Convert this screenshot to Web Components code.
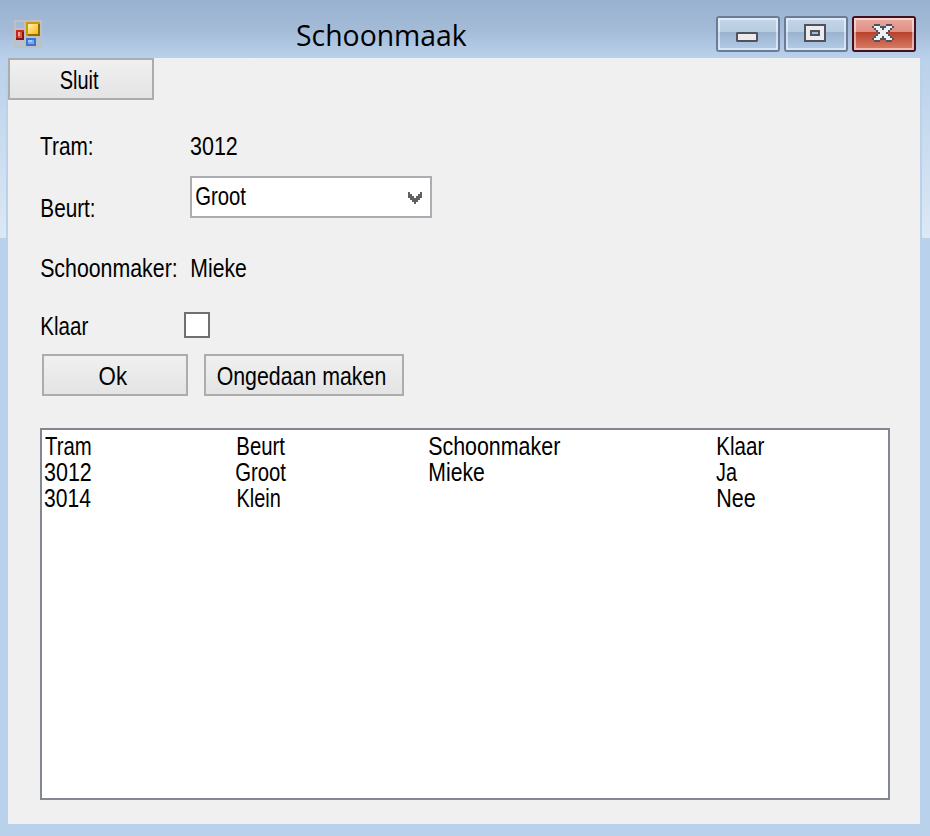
<!DOCTYPE html>
<html lang="nl">
<head>
<meta charset="utf-8">
<title>Schoonmaak</title>
<style>
body{margin:0;font:25px/26px "Liberation Sans",sans-serif;color:#000;overflow:hidden}
</style>
</head>
<body>
<app-window></app-window>
<script>
const define=(name,html,setup)=>customElements.define(name,class extends HTMLElement{
  constructor(){super();this.attachShadow({mode:'open'}).innerHTML=html}
  connectedCallback(){if(setup)setup(this,this.shadowRoot)}
});

/* Text condensed horizontally so that its ink fills the width given in "w"; "x" nudges it sideways. */
define('fit-text',`<style>:host{display:block;white-space:nowrap;flex:none;padding-top:1px}span{display:inline-block;vertical-align:top;transform-origin:0 0}</style><span><slot></slot></span>`,(el,root)=>{
  const w=+el.getAttribute('w'),x=+(el.getAttribute('x')||0),s=getComputedStyle(el),c=document.createElement('canvas').getContext('2d');
  c.font=s.fontWeight+' '+s.fontSize+' '+s.fontFamily;
  const m=c.measureText(el.textContent),l=-m.actualBoundingBoxLeft,k=w/(m.actualBoundingBoxRight-l);
  el.style.width=w+'px';
  root.querySelector('span').style.transform='translateX('+x+'px) scaleX('+k+') translateX('+(-l)+'px)';
});

define('app-icon',`<style>:host{display:block;width:28px;height:28px}svg{display:block}</style>
<svg width="28" height="28" viewBox="0 0 14 14" shape-rendering="crispEdges">
<defs><linearGradient id="y" x2="1" y2="1"><stop stop-color="#fff3b8"/><stop offset="1" stop-color="#fdb900"/></linearGradient></defs>
<path fill="#bfc0c2" fill-rule="evenodd" d="M0 0h14v14H0zM1 1v3h4V1zM1 11v2h2v-2zM4 11v2h1v-2zM12 9v4h1V9z"/>
<path fill="#c42a1a" d="M1 5h4v5H1z"/><path fill="#8c1410" d="M4 6h1v4H1V9h3z"/><path fill="#d85a50" d="M2 6h2v3H2z"/><path fill="#f3a49d" d="M2 6h1v2H2z"/>
<path fill="#c99812" d="M6 1h7v7H6z"/><path fill="#8f6c00" d="M12 2h1v6H7V7h5z"/><path fill="url(#y)" d="M7 2h5v5H7z"/>
<path fill="#3f73d0" d="M6 9h5v4H6z"/><path fill="#75a6fa" d="M7 10h3v2H7z"/><path fill="#a6c8ff" d="M7 10h2v1H7z"/></svg>`);

define('caption-button',`<style>
:host{display:block;box-sizing:border-box;width:64px;height:36px;border:2px solid #697d9a;border-radius:3px;background:linear-gradient(#c3d6e8,#b8cce0 14px,#9ab2cd 14px,#b3cde7)}
:host([kind=close]){border-color:#431021;background:linear-gradient(#eba99f,#df8f82 14px,#b8402a 14px,#d9806a)}
div{box-sizing:border-box;height:32px;border:2px solid #ffffff80;display:flex;justify-content:center;padding:4px 2px 0 0}
svg{display:none}:host([kind=min]) .min,:host([kind=max]) .max,:host([kind=close]) .close{display:block}
</style><div>
<svg class="min" width="22" height="18" viewBox="0 0 11 9"><path fill="#51525f" d="M.5 4h10l.5.5v4l-.5.5H.5L0 8.500v-4z"/><path fill="#ececec" d="M1 5h9v3H1z"/></svg>
<svg class="max" width="22" height="18" viewBox="0 0 11 9" shape-rendering="crispEdges"><path fill="#51525f" d="M0 0h11v9H0z"/><path fill="#ececec" d="M1 1h9v7H1z"/><path fill="#51525f" d="M3 3h5v3H3z"/><path fill="#9ebbd9" d="M4 4h3v1H4z"/></svg>
<svg class="close" width="22" height="18" viewBox="0 0 11 9" shape-rendering="crispEdges"><path fill="#51525f" d="M1 0h3v1h3V0h3v1h1v1h-1v1H9v1H8v1h1v1h1v1h1v1h-1v1H7V8H4v1H1V8H0V7h1V6h1V5h1V4H2V3H1V2H0V1h1z"/><path fill="#f0f0f0" d="M1 1h3v1h1v1h1V2h1V1h3v1H9v1H8v1H7v1h1v1h1v1h1v1H7V7H6V6H5v1H4v1H1V7h1V6h1V5h1V4H3V3H2V2H1z"/></svg>
</div>`);

define('title-bar',`<style>:host{display:flex;height:58px;padding:0 14px;box-sizing:border-box;background:linear-gradient(#99b2cf,#a3bbd7 50%,#b9d1ea)}
app-icon{margin-top:20px}fit-text{font:30px/40px "Open Sans",sans-serif;margin:14px 0 0 255px}
nav{display:flex;gap:4px;margin:16px 0 0 auto}</style>
<app-icon></app-icon><fit-text w="170">Schoonmaak</fit-text>
<nav><caption-button kind="min"></caption-button><caption-button kind="max"></caption-button><caption-button kind="close"></caption-button></nav>`);

define('push-button',`<style>:host{display:flex;justify-content:center;box-sizing:border-box;width:146px;height:42px;padding-top:6px;border:2px solid #acacac;background:linear-gradient(#f0f0f0,#e4e4e4)}</style><slot></slot>`);

define('combo-box',`<style>:host{display:flex;justify-content:space-between;box-sizing:border-box;width:242px;height:42px;border:2px solid #abadb3;background:#fff;padding:4px 8px 0 4px}svg{margin-top:10px}</style><slot></slot>
<svg width="14" height="12" viewBox="0 0 7 6" shape-rendering="crispEdges"><path fill="#606060" d="M0 0h1v1h1v1h1v1h1V2h1V1h1V0h1v3H6v1H5v1H4v1H3V5H2V4H1V3H0z"/></svg>`);

define('check-box',`<style>:host{display:block;box-sizing:border-box;width:26px;height:26px;border:2px solid #707070;background:#fff}</style>`);

define('form-row',`<style>:host{display:grid;grid-template-columns:150px auto;justify-content:start;align-items:start}::slotted([slot=label]){margin-left:1px}</style><slot name="label"></slot><slot></slot>`);

define('tram-list',`<style>:host{display:block;box-sizing:border-box;width:850px;height:372px;border:2px solid #828790;background:#fff;padding:2px 0 0 3px}
div{display:grid;grid-template-columns:191px 192px 287px auto;height:26px}</style>
<div><fit-text w="46">Tram</fit-text><fit-text w="47" x="2">Beurt</fit-text><fit-text w="131" x="1">Schoonmaker</fit-text><fit-text w="46" x="3">Klaar</fit-text></div>
<div><fit-text w="47" x="-1">3012</fit-text><fit-text w="50">Groot</fit-text><fit-text w="54" x="2">Mieke</fit-text><fit-text w="21" x="1">Ja</fit-text></div>
<div><fit-text w="47" x="-1">3014</fit-text><fit-text w="42" x="2">Klein</fit-text><span></span><fit-text w="37" x="3">Nee</fit-text></div>`);

define('app-window',`<style>
:host{display:block;box-sizing:border-box;width:930px;height:836px;
background:linear-gradient(#b9d1ea,#dce8f6 180px) 0 58px/6px 180px no-repeat,linear-gradient(#b9d1ea,#dce8f6 180px) 922px 58px/8px 180px no-repeat,#b9d1ea}
main{margin:0 10px 0 8px;height:766px;background:#f0f0f0;display:flow-root}
form{margin:32px 0 0 32px;display:block}
.b{margin-top:17px}.b [slot=label]{margin-top:18px}
.s{margin-top:33px}
.k{margin-top:31px;grid-template-columns:144px auto}
.a{display:flex;gap:16px;margin:15px 0 32px 2px}.wide{width:200px}
</style>
<title-bar></title-bar>
<main><push-button><fit-text w="38" x="-1.500">Sluit</fit-text></push-button>
<form>
<form-row><fit-text slot="label" w="52" x="-1">Tram:</fit-text><fit-text w="47">3012</fit-text></form-row>
<form-row class="b"><fit-text slot="label" w="52" x="1">Beurt:</fit-text><combo-box><fit-text w="50">Groot</fit-text></combo-box></form-row>
<form-row class="s"><fit-text slot="label" w="135">Schoonmaker:</fit-text><fit-text w="54" x="2">Mieke</fit-text></form-row>
<form-row class="k"><fit-text slot="label" w="46" x="1">Klaar</fit-text><check-box></check-box></form-row>
<div class="a"><push-button><fit-text w="28" x="-1.500">Ok</fit-text></push-button><push-button class="wide"><fit-text w="168" x="-2.500">Ongedaan maken</fit-text></push-button></div>
<tram-list></tram-list>
</form></main>`);
</script>
</body>
</html>
